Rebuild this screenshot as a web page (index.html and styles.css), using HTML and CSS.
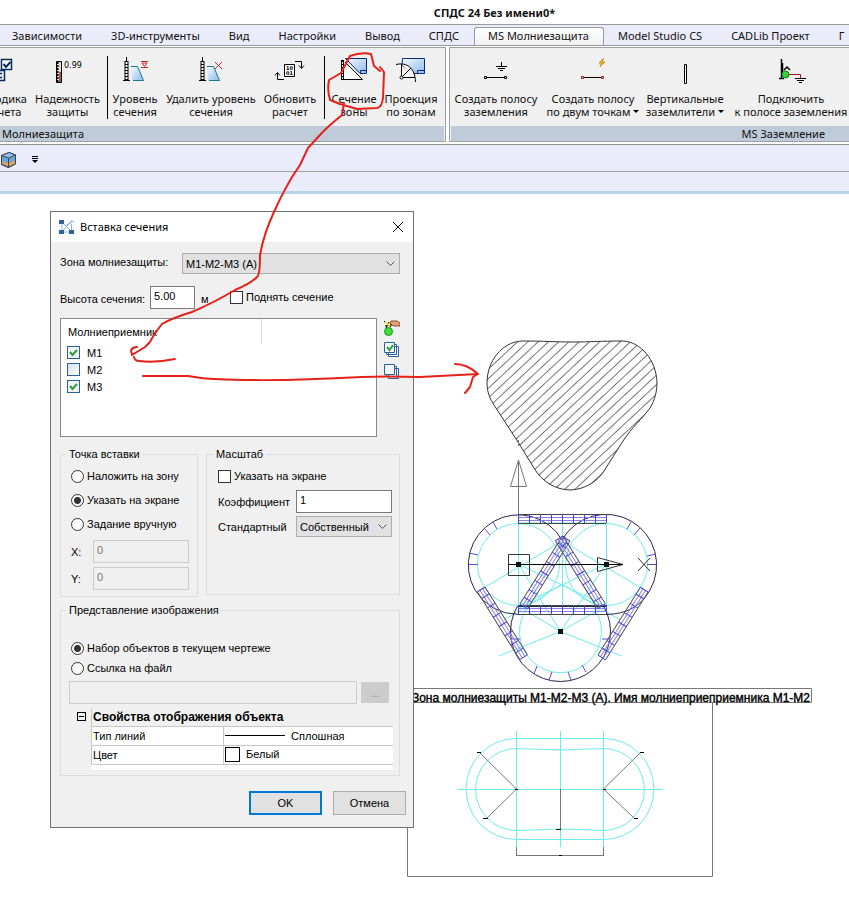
FILE: index.html
```
<!DOCTYPE html>
<html lang="ru">
<head>
<meta charset="utf-8">
<title>СПДС 24 Без имени0*</title>
<link rel="stylesheet" href="styles.css">
</head>
<body>
<svg class="shared" width="0" height="0" aria-hidden="true">
  <defs>
    <linearGradient id="sky" x1="0" y1="0" x2="1" y2="1"><stop offset="0" stop-color="#f4f9ff"/><stop offset="1" stop-color="#8fb9ec"/></linearGradient>
    <g id="mast"><path d="M14.500 10.500H20.500L26.500 24.500H15Z" fill="url(#sky)"/><path d="M14 10.500H20.500L26.500 24.500H16" fill="none" stroke="#147a8c"/><path d="M9.500 1V24" stroke="#000"/><path d="M9.500 5V24" stroke="#000" stroke-width="4"/><path d="M9.500 6V24" stroke="#fff" stroke-width="2" stroke-dasharray="2 1"/><path d="M6 24.500H13" stroke="#000"/></g>
  </defs>
</svg>
<header class="titlebar"><h1>СПДС 24 Без имени0*</h1></header>
<nav class="tabs">
  <a href="#">Зависимости</a><a href="#">3D-инструменты</a><a href="#">Вид</a><a href="#">Настройки</a><a href="#">Вывод</a><a href="#">СПДС</a><a href="#" class="active">MS Молниезащита</a><a href="#">Model Studio CS</a><a href="#">CADLib Проект</a><a href="#">Г</a>
</nav>
<div class="ribbon">
  <section class="panel panel-protect">
    <div class="tools">
      <button type="button"><svg class="ico" width="36" height="32" viewBox="0 0 36 32"><path d="M0 14.500H22.500V24.500H0M14 17.500H20M14 21.500H20" fill="#e4f1fb" stroke="#0a2a5c" stroke-width="1.500"/><path d="M19.500 3.500H29.500V13.500H19.500Z" fill="#fff" stroke="#0a2a5c" stroke-width="1.500"/><path d="M21.500 8l2.500 3 4.500-5" fill="none" stroke="#0a2a5c" stroke-width="2"/></svg><span>Методика<br>расчета</span></button>
      <button type="button"><svg class="ico" width="36" height="32" viewBox="0 0 36 32"><path d="M7.500 5.500H12.500V26.500H7.500Z" fill="#e9d5d0" stroke="#000"/><path d="M11 16V26" stroke="#9b5a52" stroke-width="2"/><path d="M8.500 6V26" stroke="#000" stroke-width="2" stroke-dasharray="2 1"/><text x="15" y="12" class="tiny">0.99</text></svg><span>Надежность<br>защиты</span></button>
      <i class="sep"></i>
      <button type="button"><svg class="ico" width="36" height="32" viewBox="0 0 36 32"><use href="#mast"/><path d="M24 5.500H31M25 7L27.500 10.500 30 7ZM24 11.500H31" fill="none" stroke="#c62828"/></svg><span>Уровень<br>сечения</span></button>
      <button type="button"><svg class="ico" width="36" height="32" viewBox="0 0 36 32"><use href="#mast"/><path d="M22 6l7 7M29 6l-7 7" stroke="#c62828"/></svg><span>Удалить уровень<br>сечения</span></button>
      <button type="button"><svg class="ico" width="36" height="32" viewBox="0 0 36 32"><path d="M12.500 8.500H22.500V20.500H12.500Z" fill="#fff" stroke="#000"/><text x="14" y="14" class="bits">10</text><text x="14" y="19" class="bits">01</text><path d="M23 5.500H29.500V12M27 9.500l2.500 3 2.500-3M12 23.500H5.500V17M3 19.500l2.500-3 2.500 3" fill="none" stroke="#000"/></svg><span>Обновить<br>расчет</span></button>
      <i class="sep"></i>
      <button type="button"><svg class="ico" width="36" height="32" viewBox="0 0 36 32"><path d="M9.500 2.500H30.500V17.500H24L12 5Z" fill="url(#sky)" stroke="#0a2a7c"/><path d="M24.500 17V14.500H30" fill="none" stroke="#0a2a7c"/><path d="M9 6L26.500 23.500H5" fill="#fff" stroke="#000"/><path d="M6.500 4V23" stroke="#000" stroke-width="3"/><path d="M6.500 6V23" stroke="#fff" stroke-dasharray="2 1"/></svg><span>Сечение<br>зоны</span></button>
      <button type="button"><svg class="ico" width="36" height="32" viewBox="0 0 36 32"><path d="M9.500 2.500H31.500V17.500H20L9 9Z" fill="url(#sky)" stroke="#0a2a7c"/><path d="M24.500 17V14.500H31" fill="none" stroke="#0a2a7c"/><path d="M3 8.500C14 6 22 12 22.500 26M8.500 8V21.500H22" fill="#fff" stroke="#000"/><path d="M10 20l8-8" stroke="#000"/><circle cx="8.500" cy="21.500" r="1.500" fill="#fff" stroke="#000"/></svg><span>Проекция<br>по зонам</span></button>
    </div>
    <h2>Молниезащита</h2>
  </section>
  <section class="panel panel-ground">
    <div class="tools">
      <button type="button"><svg class="ico" width="36" height="32" viewBox="0 0 36 32"><path d="M8 21.500H26M23.500 6V10M18 10.500H29M20 12.500H27M22 14.500H25" stroke="#000"/><path d="M6.500 20.500H8.500V22.500H6.500ZM26.500 20.500H28.500V22.500H26.500Z" fill="#fff" stroke="#000"/></svg><span>Создать полосу<br>заземления</span></button>
      <button type="button"><svg class="ico" width="36" height="32" viewBox="0 0 36 32"><path d="M8 21.500H26" stroke="#000"/><path d="M6.500 20.500H8.500V22.500H6.500ZM26.500 20.500H28.500V22.500H26.500Z" fill="#fff" stroke="#b01010"/><path d="M28.500 2.500L24 7H27L25 10.500 30 6H27Z" fill="#ffe13a" stroke="#c08a10"/></svg><span>Создать полосу<br>по двум точкам<b class="arrow"></b></span></button>
      <button type="button"><svg class="ico" width="36" height="32" viewBox="0 0 36 32"><path d="M17.500 8.500H19.500V27.500H17.500Z" fill="#fff" stroke="#000"/></svg><span>Вертикальные<br>заземлители<b class="arrow"></b></span></button>
      <button type="button"><svg class="ico" width="36" height="32" viewBox="0 0 36 32"><path d="M8.500 3V22M6 22.500H11M9.500 7V16M11 14l3-3 3 3" fill="none" stroke="#000" stroke-width="1.500"/><path d="M14 18.500H27.500V22" fill="none" stroke="#b01010"/><path d="M22 22.500H33M24 24.500H31M26 26.500H29" stroke="#000"/><circle cx="12.500" cy="18.500" r="3.500" fill="#35d435" stroke="#167a16"/></svg><span>Подключить<br>к полосе заземления</span></button>
    </div>
    <h2>MS Заземление</h2>
  </section>
</div>
<div class="quickbar">
  <button type="button" aria-label="Вид"><svg width="18" height="18" viewBox="0 0 18 18"><path d="M1.500 4.500L9 1.500 15.500 4V13L8.500 16.500 1.500 13.500Z" fill="#d3a468" stroke="#3b4654"/><path d="M1.500 4.500L9 1.500 15.500 4V9L8.500 12 1.500 10Z" fill="#6aa5d8"/><path d="M1.500 4.500L9 1.500 15.500 4 8.500 7Z" fill="#8fc2e8"/><path d="M1.500 4.500L9 1.500 15.500 4V13L8.500 16.500 1.500 13.500ZM1.500 4.500L8.500 7 15.500 4M8.500 7V16" fill="none" stroke="#3b4654"/></svg></button>
  <button type="button" aria-label="Ещё"><svg width="8" height="8" viewBox="0 0 8 8"><path d="M1 .5H7M1 2.500H7" stroke="#000"/><path d="M1 4H7L4 7Z"/></svg></button>
</div>
<div class="dockbar"></div>

<main class="canvas">
  <svg class="drawing" role="img" aria-label="Чертёж зон молниезащиты">
    <defs>
      <pattern id="hatch" width="7" height="7" patternUnits="userSpaceOnUse" patternTransform="translate(528 341) rotate(-43)"><path d="M0 .5H7" stroke="#777"/></pattern>
      <g id="band" fill="none"><path d="M0 .5H88M0 9.500H88" stroke="#444"/><path d="M0 3.500H88M0 6.500H88" stroke="#8f7ce4"/><path d="M.5 0V9M11.500 0V9M22.500 0V9M33.500 0V9M44.500 0V9M55.500 0V9M66.500 0V9M77.500 0V9M88.500 0V9" stroke="#4444d8"/></g>
      <g id="slant" fill="none"><path d="M0 0H80M0 9H80" stroke="#555"/><path d="M0 3H80M0 6H80" stroke="#8f7ce4"/><path d="M0 0V9M8 0V9M19 0V9M30 0V9M41 0V9M52 0V9M63 0V9M72 0V9M80 0V9" stroke="#4444d8"/></g>
    </defs>
    <g transform="translate(0 -194)">
      <path class="hatched" d="M522 341C502 342 487 361 487 383C487 392 490 399 494 405L518 442L534 468C542 482 556 490 571 490C585 489 597 482 604 471L623 441C632 427 642 419 650 408C655 400 657 391 657 382C656 360 641 342 623 341C600 341 590 342 573 342C555 342 545 341 522 341Z"/>
      <path class="grey" d="M518.500 564V460L510.500 486.500H526.500L518.500 460M518.500 440V446"/>

      <g class="cyan">
        <path d="M518.500 523V606M606.500 523V606M562.500 514V606M482 589L562 541 643 589M518 606L606 564M606 606L518 564M499 656L560.500 631.500 622 656M518.500 564L560.500 631.500 606 564M518 523H606M504 620L562 584 620 620M518 606L560.500 631.500 606 606"/>
        <circle cx="518.500" cy="564.500" r="41"/><circle cx="606.500" cy="564.500" r="41"/>
        <path d="M528.500 606A41 41 0 1 0 592.500 606"/>
      </g>
      <g class="navy">
        <path d="M475 590A50 50 0 1 1 562 540M650 590A50 50 0 1 0 562 540M475 590Q490 614 519 614.500M650 590Q637 614 606 614.500M518 606.500H606"/>
        <path d="M517.500 606A50 50 0 1 0 603.500 606"/>
      </g>
      <path class="violet" d="M468 564.500H478M469 553L478 555M484 528L490 535M493 522L497 529M647 564.500H657M656 554L647 556M640 528L634 535M631 522L627 529M534 674L537 666M549 680L552 672M571 680L568 672M586 672L582 665M511 639H520M610 639H602"/>
      <use href="#band" x="518" y="514"/><use href="#band" x="518" y="605"/>
      <use href="#slant" transform="translate(485 587) rotate(58)"/>
      <use href="#slant" transform="translate(648 592) rotate(122)"/>
      <use href="#slant" transform="translate(570 541) rotate(122)"/>
      <use href="#slant" transform="translate(563 536) rotate(58)"/>
      <path class="ink" d="M508.500 554.500H529.500V575.500H508.500ZM597.500 557.500L623 564.500 597.500 571.500ZM638 558L650 571M650 558L638 571"/>
      <path d="M508 564.500H623" stroke="#000"/>
      <path d="M516 562H521V567H516ZM604 562H609V567H604ZM558 629H563V634H558Z" fill="#111"/>

      <path class="grey" d="M400 688.500H811.500V702.500M400 702.500H811"/>
      <path class="grey" d="M407.500 702.500H712.500V876.500H407.500Z"/>
      <text class="caption" x="810" y="702" text-anchor="end">Зона молниезащиты М1-М2-М3 (А). Имя молниеприеприемника М1-М2</text>

      <path class="cyan" d="M516.500 738.500H603.500A50.500 50.500 0 0 1 603.500 839.500H516.500A50.500 50.500 0 0 1 516.500 738.500ZM516.500 748.500L560.500 750 603.500 748.500A41 41 0 0 1 603.500 830.500L560.500 829 516.500 830.500A41 41 0 0 1 516.500 748.500ZM458 789.500H662M516.500 731V847M560.500 731V847M603.500 731V847"/>
      <path class="grey" d="M480 753L516.500 789 487 818M640 753L603.500 789 634 818M560.500 789V829M516.500 847V856M603.500 847V856M516.500 855.500H603.500"/>
      <path d="M477 752.500H481M483 818.500H488M640 752.500H644M634 818.500H638M556 829.500H561M559 855.500H562M515 789.500H518M603 789.500H606" stroke="#000"/>
    </g>
  </svg>

  <form class="dialog" aria-labelledby="dlg">
    <div class="dialog-title">
      <svg width="16" height="16" viewBox="0 0 16 16"><path d="M3 3L13 13M13 1L3 13M6 7L15 2M12.500 5V12M5 13H10" fill="none" stroke="#8db4dc"/><path d="M0 1H5V5H0ZM0 11H5V15H0ZM10 11H15V15H10Z" fill="#2f6299"/><path d="M3 5V11" stroke="#9bbce0"/></svg>
      <h2 id="dlg">Вставка сечения</h2>
      <button type="button" aria-label="Закрыть"><svg width="12" height="12" viewBox="0 0 12 12"><path d="M1 1l10 10M11 1L1 11" stroke="#111"/></svg></button>
    </div>
    <div class="dialog-body">
      <div class="row zone-row"><label for="zone">Зона молниезащиты:</label><select id="zone"><option>М1-М2-М3 (А)</option></select></div>
      <div class="row height-row"><label for="h">Высота сечения:</label><input id="h" type="text" value="5.00"><span class="unit">м</span><label class="check"><input type="checkbox">Поднять сечение</label></div>
      <div class="list-row">
        <div class="list">
          <div class="list-head"><span>Молниеприемник</span></div>
          <label class="check tinted"><input type="checkbox" checked>М1</label>
          <label class="check tinted"><input type="checkbox">М2</label>
          <label class="check tinted"><input type="checkbox" checked>М3</label>
        </div>
        <div class="list-tools">
          <button type="button" aria-label="Выбрать на чертеже"><svg width="16" height="16" viewBox="0 0 16 16"><path d="M7 1H13L16 3V6H10L6 4Z" fill="#e2a078" stroke="#8f4b2b"/><path d="M0 1L7 7M5 2L2 8M1 6L8 5" stroke="#000"/><path d="M1 2L6 6" stroke="#f7e23c" stroke-width="2"/><circle cx="4.500" cy="11.500" r="4" fill="#3fdc3f" stroke="#1b9a1b"/></svg></button>
          <button type="button" aria-label="Отметить все"><svg width="16" height="16" viewBox="0 0 16 16"><use href="#stack"/><path d="M3 5l2.500 3L9 3" fill="none" stroke="#2f9e3c" stroke-width="2"/></svg></button>
          <button type="button" aria-label="Снять все"><svg width="16" height="16" viewBox="0 0 16 16"><g id="stack"><path d="M4.500 4.500H14.500V14.500H4.500ZM2.500 2.500H12.500V12.500H2.500Z" fill="#fff" stroke="#28619c"/><path d="M.5 .5H10.500V10.500H.5Z" fill="#f4f7fb" stroke="#28619c"/></g></svg></button>
        </div>
      </div>
      <div class="groups">
        <fieldset class="insert">
          <legend>Точка вставки</legend>
          <label class="check"><input type="radio" name="p">Наложить на зону</label>
          <label class="check"><input type="radio" name="p" checked>Указать на экране</label>
          <label class="check"><input type="radio" name="p">Задание вручную</label>
          <div class="coord"><label for="x">X:</label><input id="x" type="text" value="0" disabled></div>
          <div class="coord"><label for="y">Y:</label><input id="y" type="text" value="0" disabled></div>
        </fieldset>
        <fieldset class="scale">
          <legend>Масштаб</legend>
          <label class="check"><input type="checkbox">Указать на экране</label>
          <div class="coord"><label for="k">Коэффициент</label><input id="k" type="text" value="1"></div>
          <div class="coord"><label for="s">Стандартный</label><select id="s"><option>Собственный</option></select></div>
        </fieldset>
      </div>
      <fieldset class="view">
        <legend>Представление изображения</legend>
        <label class="check"><input type="radio" name="v" checked>Набор объектов в текущем чертеже</label>
        <label class="check"><input type="radio" name="v">Ссылка на файл</label>
        <div class="file"><input type="text" aria-label="Файл" disabled><button type="button" disabled>...</button></div>
        <div class="props">
          <button type="button" class="fold" aria-label="Свернуть"></button>
          <table>
            <thead><tr><th colspan="2">Свойства отображения объекта</th></tr></thead>
            <tbody>
              <tr><td>Тип линий</td><td><i class="line"></i>Сплошная</td></tr>
              <tr><td>Цвет</td><td><i class="swatch"></i>Белый</td></tr>
            </tbody>
          </table>
        </div>
      </fieldset>
      <div class="actions"><button type="submit" class="primary">OK</button><button type="button">Отмена</button></div>
    </div>
  </form>
</main>
<svg class="markup" aria-hidden="true">
  <path d="M341 73L350 56Q361 52 371 54L374 66 380 71M380 67L384 72 383 98Q382 107 377 108L357 109 340 104 330 100Q327 90 329 80L341 73M344 103L342 115Q326 128 320 135L308 148 300 165 292 177Q281 196 274 212Q264 233 260 255Q260 275 257 277Q250 284 235 290Q215 302 192 312Q172 318 162 324Q154 334 150 342L145 347 132 355 131 350Q133 347 137 347M134 357Q135 361 139 361Q155 363 175 359M143 376Q170 376 188 376Q205 379 215 379Q272 382 362 377Q385 376 420 377L478 374M455 364Q467 364 478 374L473 377 470 387 465 393"/>
</svg>
</body>
</html>
```
FILE: styles.css
```
* { box-sizing: border-box; }
body {
  margin: 0;
  min-height: 100vh;
  display: flex;
  flex-direction: column;
  position: relative;
  overflow: hidden;
  background: #fff;
  color: #111;
  font: 11px/13px "Noto Sans", "Open Sans", sans-serif;
}
h1, h2 { margin: 0; font-size: inherit; }
button { font: inherit; color: inherit; border: 0; padding: 0; background: none; }
svg { display: block; flex: none; }
.shared { position: absolute; }

.titlebar { height: 24px; padding-left: 140px; display: grid; place-items: center; }
.tabs {
  display: flex;
  height: 22px;
  overflow: hidden;
  border-top: 1px solid #9a9a9e;
  border-bottom: 1px solid #9a9a9e;
  background: #ebecfa;
  white-space: nowrap;
}
.tabs a { flex: none; padding: 4px 15px 0 14px; color: inherit; text-decoration: none; }
.tabs a:first-child { padding-left: 12px; }
.tabs .active {
  margin: 2px 0 -1px;
  padding: 1px 14px 0 13px;
  border: 1px solid #9a9a9e;
  border-bottom: 0;
  border-radius: 3px 3px 0 0;
  background: linear-gradient(#fff, #f0f0f0);
}

.ribbon {
  display: flex;
  gap: 3px;
  height: 98px;
  overflow: hidden;
  margin-top: 1px;
  padding-bottom: 2px;
  border-bottom: 1px solid #909090;
  background: #fff;
}
.panel {
  flex: none;
  display: flex;
  flex-direction: column;
  border: 1px solid #a0a0a0;
  background: #f0f0f0;
}
.panel-protect { width: 478px; margin-left: -32px; }
.panel-ground { width: 410px; }
.tools { flex: 1; display: grid; align-items: start; padding-top: 8px; }
.panel-protect .tools { grid-template-columns: 63px 71px 5px 54px 98px 60px 9px 50px 64px; }
.panel-ground .tools { grid-template-columns: 92px 102px 82px 130px; }
.tools button { display: grid; justify-items: center; gap: 4px; justify-content: center; white-space: nowrap; }
.sep { width: 1px; height: 63px; margin-left: 4px; background: #000; }
.panel h2 { height: 15px; margin: 0 1px; line-height: 15px; font-weight: 400; background: #bfcbd8; }
.panel-protect h2 { padding-left: 32px; }
.panel-ground h2 { padding-right: 32px; text-align: right; }
.tiny { font: 8px "DejaVu Sans", sans-serif; }
.bits { font: bold 5px "DejaVu Sans", sans-serif; }
.arrow { display: inline-block; margin-left: 3px; border: 3px solid transparent; border-top-color: #000; border-bottom: 0; vertical-align: 3px; }

.quickbar { display: flex; align-items: center; gap: 13px; height: 27px; padding: 4px 0 0; border-bottom: 1px solid #a0a0a4; background: #ebecfa; }
.dockbar { height: 22px; border-bottom: 3px solid #b9d5ea; background: #ebecfa; }

.canvas { flex: 1; position: relative; min-height: 715px; }
.drawing { position: absolute; inset: 0; width: 100%; height: 100%; }
.hatched { stroke: #333; fill: url(#hatch); }
.ink { stroke: #333; fill: none; }
.grey { stroke: #777; fill: none; }
.cyan { stroke: #6cecef; fill: none; }
.navy { stroke: #26264e; fill: none; }
.violet { stroke: #5a4acc; fill: none; }
.caption { font: 12px "Liberation Sans", Arial, sans-serif; fill: #000; stroke: #000; stroke-width: .4px; }

.dialog {
  position: absolute;
  left: 50px;
  top: 17px;
  width: 364px;
  border: 1px solid #707070;
  background: #f0f0f0;
  color: #000;
  font: 11px/14px "Liberation Sans", Arial, sans-serif;
}
.dialog-title { display: flex; align-items: center; gap: 5px; height: 30px; padding: 0 9px 0 8px; background: #fff; font: 11px/14px "Noto Sans", sans-serif; }
.dialog-title h2 { flex: 1; font-weight: 400; }
.dialog-body { padding: 11px 13px 12px 9px; }
.row { display: flex; align-items: center; }
.dialog input, .dialog select { font: inherit; color: inherit; margin: 0; }
.dialog input[type=text] { height: 23px; min-width: 0; padding: 0 3px 3px; border: 1px solid #7a7a7a; background: #fff; }
.dialog input[type=text]:disabled { border-color: #ccc; background: #f0f0f0; color: #777; }
.dialog select {
  appearance: none;
  height: 21px;
  padding: 0 3px;
  border: 1px solid #adadad;
  border-radius: 0;
  background: #e1e1e1 url("data:image/svg+xml,%3Csvg xmlns='http://www.w3.org/2000/svg' width='9' height='6'%3E%3Cpath d='M.5.5l4 4 4-4' fill='none' stroke='%23555'/%3E%3C/svg%3E") no-repeat right 4px center;
}
.zone-row label { width: 122px; padding-bottom: 3px; }
.zone-row select { flex: 1; }
.height-row { margin-top: 11px; height: 24px; }
.height-row > label:first-child { width: 90px; padding-top: 4px; }
#h { width: 45px; }
.unit { width: 35px; padding: 4px 0 0 6px; }
.check { display: flex; align-items: center; gap: 3px; }
.check input { appearance: none; flex: none; width: 13px; height: 13px; border: 1px solid #333; background: #fff; }
.check input[type=radio] { border-radius: 50%; }
.check input[type=radio]:checked { background: radial-gradient(circle, #333 3px, #fff 4px); }
.tinted { height: 17px; gap: 7px; padding-left: 6px; }
.check.tinted input { border-color: #28619c; background: linear-gradient(135deg, #d9dde6, #fff); }
.check.tinted input:checked { background: url("data:image/svg+xml,%3Csvg xmlns='http://www.w3.org/2000/svg' width='11' height='11'%3E%3Cpath d='M2 5l2.500 3L9 3' fill='none' stroke='%232f9e3c' stroke-width='2'/%3E%3C/svg%3E") #f1f3f7; }

.list-row { display: flex; gap: 7px; margin-top: 9px; }
.list { flex: 1; height: 119px; border: 1px solid #828790; background: #fff; }
.list-head { width: 201px; height: 25px; padding: 6px 0 0 7px; border-right: 1px solid #e0e0e0; }
.list-tools { display: flex; flex-direction: column; gap: 6px; padding-top: 2px; }

fieldset { margin: 0; padding: 0; min-width: 0; border: 1px solid #dcdcdc; }
legend { padding: 0 3px; }
.groups { display: grid; grid-template-columns: 138px 1fr; align-items: start; gap: 8px; margin-top: 10px; }
.insert { height: 150px; padding-left: 10px; }
.insert legend, .scale legend { margin-left: -5px; }
.insert .check, .scale .check { height: 24px; margin-top: 3px; }
.insert .check + .check { margin-top: 0; }
.coord { display: flex; align-items: center; }
.insert .coord { margin: 4px 8px 4px 0; }
.insert .coord label { width: 22px; }
.insert .coord input { flex: 1; }
.scale { height: 148px; padding: 0 7px 0 11px; }
.scale .check { margin-bottom: 2px; }
.scale .coord { margin-bottom: 3px; }
.scale .coord label { width: 78px; }
.scale .coord input, .scale .coord select { flex: 1; min-width: 0; }
.view { height: 173px; margin-top: 6px; padding: 21px 6px 0 8px; }
.view legend { margin-left: -3px; }
.view .check { height: 20px; padding-left: 2px; }
.file { display: flex; gap: 4px; margin-top: 3px; padding-right: 4px; }
.file input { flex: 1; }
.file button { width: 28px; height: 21px; margin-top: 1px; background: #ccc; color: #888; }
.props { display: flex; align-items: flex-start; gap: 5px; margin-top: 4px; padding-left: 8px; }
.fold { width: 9px; height: 9px; margin-top: 4px; border: 1px solid #000; background: linear-gradient(#000, #000) center / 5px 1px no-repeat; }
.props table { flex: 1; border-collapse: collapse; border-left: 1px solid #c8c8c8; box-shadow: 0 5px #fff; }
.props th { height: 18px; padding: 0 1px; text-align: left; font-size: 12px; }
.props td { height: 19px; padding: 0 1px; border: 1px solid #c8c8c8; border-right: 0; background: #fff; }
.props td:first-child { width: 132px; }
.line { display: inline-block; width: 60px; height: 1px; margin-right: 6px; background: #000; vertical-align: 4px; }
.swatch { display: inline-block; width: 15px; height: 15px; margin-right: 6px; border: 1px solid #000; vertical-align: middle; }
.actions { display: flex; justify-content: flex-end; gap: 11px; margin: 15px -6px 0 0; }
.actions button { width: 73px; height: 24px; border: 1px solid #adadad; background: #e1e1e1; }
.actions .primary { border: 2px solid #0078d7; }

.markup { position: absolute; inset: 0; width: 100%; height: 100%; pointer-events: none; }
.markup path { fill: none; stroke: #e8201a; stroke-width: 2px; stroke-linecap: round; stroke-linejoin: round; }
```
